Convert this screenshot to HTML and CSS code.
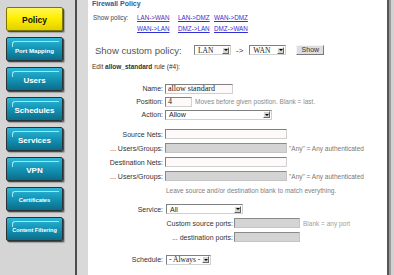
FILE: index.html
```html
<!DOCTYPE html>
<html lang="en">
<head>
  <meta charset="UTF-8" />
  <title>Firewall Policy</title>
  <link rel="stylesheet" href="styles.css">
</head>
<body>
  <div class="page">

    <!-- left navigation -->
    <div class="sidebar">
      <a class="nav-btn active">Policy</a>
      <a class="nav-btn fs-port">Port Mapping</a>
      <a class="nav-btn">Users</a>
      <a class="nav-btn">Schedules</a>
      <a class="nav-btn">Services</a>
      <a class="nav-btn">VPN</a>
      <a class="nav-btn fs-cert">Certificates</a>
      <a class="nav-btn fs-filter">Content Filtering</a>
    </div>
    <div class="gutter"></div>

    <div class="content">
      <div class="title">Firewall Policy</div>

      <div class="show-policy">
        <span class="sp-label">Show policy:</span>
        <div class="policy-links">
          <a class="visited">LAN-&gt;WAN</a>
          <a>LAN-&gt;DMZ</a>
          <a>WAN-&gt;DMZ</a>
          <a>WAN-&gt;LAN</a>
          <a>DMZ-&gt;LAN</a>
          <a>DMZ-&gt;WAN</a>
        </div>
      </div>

      <div class="custom-policy">
        <span class="cp-label">Show custom policy:</span>
        <span class="select sel-zone">LAN<i class="arrow"></i></span>
        <span class="cp-arrow">-&gt;</span>
        <span class="select sel-zone">WAN<i class="arrow"></i></span>
        <button class="btn">Show</button>
      </div>

      <div class="edit-line">Edit <b>allow_standard</b> rule (#4):</div>

      <div class="form">
        <div class="row">
          <label>Name:</label>
          <span class="text w-name">allow standard</span>
        </div>
        <div class="row">
          <label>Position:</label>
          <span class="text w-pos">4</span>
          <span class="note">Moves before given position. Blank = last.</span>
        </div>
        <div class="row">
          <label>Action:</label>
          <span class="select sans w-action">Allow<i class="arrow"></i></span>
        </div>

        <div class="group">
          <div class="row tall">
            <label>Source Nets:</label>
            <span class="text w-net"></span>
          </div>
          <div class="row tall">
            <label>... Users/Groups:</label>
            <span class="text off w-net"></span>
            <span class="note dark">"Any" = Any authenticated</span>
          </div>
          <div class="row tall">
            <label>Destination Nets:</label>
            <span class="text w-net"></span>
          </div>
          <div class="row tall">
            <label>... Users/Groups:</label>
            <span class="text off w-net"></span>
            <span class="note dark">"Any" = Any authenticated</span>
          </div>
          <div class="row tall">
            <span class="note hint">Leave source and/or destination blank to match everything.</span>
          </div>
        </div>

        <div class="group svc">
          <div class="row tall">
            <label>Service:</label>
            <span class="select sans w-service">All<i class="arrow"></i></span>
          </div>
          <div class="row tall">
            <span class="sub-label">Custom source ports:</span>
            <span class="text off w-port"></span>
            <span class="note light">Blank = any port</span>
          </div>
          <div class="row tall">
            <span class="sub-label">... destination ports:</span>
            <span class="text off w-port"></span>
          </div>
        </div>

        <div class="group sched">
          <div class="row">
            <label>Schedule:</label>
            <span class="select w-sched">- Always -<i class="arrow"></i></span>
          </div>
        </div>
      </div>
    </div>

    <div class="frame-right"></div>
  </div>
</body>
</html>
```

FILE: styles.css
```css
html, body {
  margin: 0;
  height: 100%;
}

body {
  font-family: "Liberation Sans", Arial, sans-serif;
  color: #333;
  background: #fff;
  overflow: hidden;
}

.page {
  display: flex;
  height: 275px;
}

/* --- sidebar --- */
.sidebar {
  width: 77px;
  box-sizing: border-box;
  background: #d5d5d5;
  border-right: 2px solid #4d4d4d;
  display: flex;
  flex-direction: column;
  gap: 6px;
  padding: 7px 0 0 6px;
  flex-shrink: 0;
}

.nav-btn {
  position: relative;
  width: 57px;
  height: 24px;
  box-sizing: border-box;
  display: flex;
  justify-content: center;
  align-items: center;
  padding-top: 2px;
  border: 1px solid #2a3336;
  border-radius: 2px;
  background: linear-gradient(#2fb6d6, #1597b9 45%, #0b6d8a);
  box-shadow: 1px 1px 0 #4a4a4a, 2px 2px 1px rgba(0,0,0,0.25);
  color: #fff;
  font-weight: bold;
  font-size: 8px;
  white-space: nowrap;
}

.nav-btn::before {
  content: "";
  position: absolute;
  top: 3px;
  left: 5px;
  right: 3px;
  height: 5px;
  border-top: 1px solid #9be8f7;
  border-left: 1px solid #9be8f7;
  border-top-left-radius: 3px;
}

.nav-btn.fs-port { font-size: 6.1px; }
.nav-btn.fs-cert { font-size: 5.8px; }
.nav-btn.fs-filter { font-size: 5.6px; }

.nav-btn.active {
  background: linear-gradient(#fff65c, #ffef00 45%, #e2d000);
  border-color: #7d7600;
  color: #111;
  font-size: 8.5px;
}

.nav-btn.active::before {
  display: none;
}

.gutter {
  width: 11px;
  background: #d9d9d9;
  flex-shrink: 0;
}

.frame-right {
  width: 7px;
  flex-shrink: 0;
  background: linear-gradient(to right, #555 0 2px, #9a9a9a 2px 4px, #d2d2d2 4px);
}

/* --- content --- */
.content {
  flex: 1;
  padding-left: 4px;
}

.title {
  height: 8px;
  line-height: 8px;
  font-size: 7px;
  font-weight: bold;
  color: #2d5c9e;
}

.show-policy {
  display: flex;
  margin-top: 4px;
  font-size: 6.3px;
  line-height: 11px;
  color: #444;
}

.sp-label {
  width: 44px;
  padding-left: 1px;
}

.policy-links {
  display: grid;
  grid-template-columns: 41px 36px auto;
}

.policy-links a {
  color: #3030d0;
  text-decoration: underline;
}

.policy-links a.visited {
  color: #6a2a9a;
}

.custom-policy {
  display: flex;
  align-items: center;
  height: 12px;
  margin-top: 10px;
}

.cp-label {
  width: 99px;
  padding-left: 3px;
  font-size: 9.5px;
  color: #555;
}

.cp-arrow {
  margin: 0 6px 0 5px;
  font-size: 8px;
  color: #333;
}

.btn {
  margin-left: 10px;
  width: 28px;
  height: 10px;
  padding: 0;
  border: 1px solid;
  border-color: #f4f4f4 #7a7a7a #7a7a7a #f4f4f4;
  background: #dedede;
  font-family: "Liberation Sans", Arial, sans-serif;
  font-size: 7px;
  color: #333;
  line-height: 8px;
}

.edit-line {
  margin-top: 5px;
  height: 12px;
  line-height: 12px;
  font-size: 6.5px;
  color: #333;
}

/* --- form --- */
.form {
  margin-top: 9px;
  font-size: 7px;
}

.row {
  display: flex;
  align-items: center;
  height: 13px;
}

.row.tall {
  height: 14px;
}

.row label {
  width: 71px;
  margin-right: 2px;
  text-align: right;
  color: #333;
}

.group {
  margin-top: 6px;
}

.group.svc {
  margin-top: 5px;
}

.group.sched {
  margin-top: 9px;
}

.sub-label {
  width: 141px;
  margin-right: 1px;
  text-align: right;
  color: #333;
}

.text {
  box-sizing: border-box;
  height: 10px;
  padding: 0 2px;
  border-style: solid;
  border-width: 1px;
  border-top-color: #808080;
  border-left-color: #808080;
  border-right-color: #d0d0d0;
  border-bottom-color: #d0d0d0;
  background: #fefafa;
  font-family: "Liberation Serif", "Times New Roman", serif;
  font-size: 8px;
  line-height: 8px;
  color: #222;
}

.text.off {
  background: #d4d4d4;
  border-top-color: #8a8a8a;
  border-left-color: #8a8a8a;
  border-right-color: #c4c4c4;
  border-bottom-color: #c4c4c4;
}

.w-name { width: 68px; }
.w-pos { width: 27px; }
.w-net { width: 122px; }
.w-port { width: 66px; }

.note {
  margin-left: 3px;
  font-size: 6.5px;
  color: #8a8a8a;
  white-space: nowrap;
}

.note.dark {
  margin-left: 2px;
  color: #777;
}

.note.light {
  color: #a0a0a0;
}

.note.hint {
  margin-left: 74px;
  color: #808080;
}

.select {
  box-sizing: border-box;
  display: inline-flex;
  align-items: center;
  justify-content: space-between;
  height: 10px;
  padding: 0 1px 0 3px;
  border-style: solid;
  border-width: 1px;
  border-top-color: #808080;
  border-left-color: #808080;
  border-right-color: #d0d0d0;
  border-bottom-color: #d0d0d0;
  background: #fff;
  font-family: "Liberation Serif", "Times New Roman", serif;
  font-size: 7.5px;
  color: #222;
}

.select.sans {
  font-family: "Liberation Sans", Arial, sans-serif;
  font-size: 7px;
}

.arrow {
  box-sizing: border-box;
  width: 7px;
  height: 7px;
  display: flex;
  justify-content: center;
  align-items: center;
  background: #d6d3ce;
  border: 1px solid;
  border-color: #fff #666 #666 #fff;
}

.arrow::after {
  content: "";
  border-left: 2px solid transparent;
  border-right: 2px solid transparent;
  border-top: 2px solid #000;
}

.sel-zone { width: 37px; }
.w-action { width: 107px; }
.w-service { width: 77px; margin-left: 1px; }
.w-sched { width: 45px; margin-left: 1px; padding-left: 2px; }
```
